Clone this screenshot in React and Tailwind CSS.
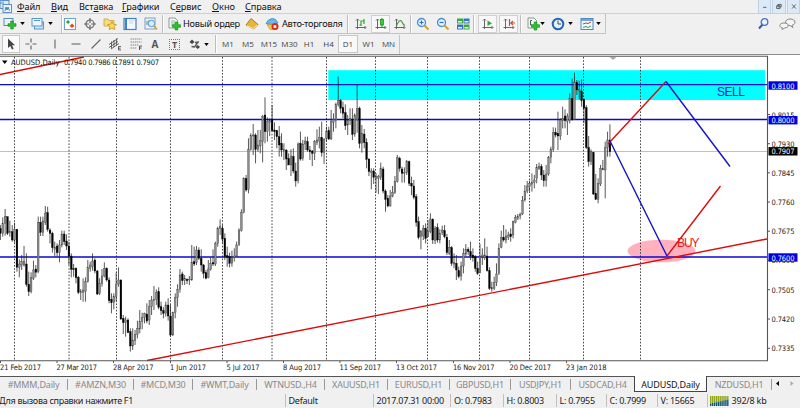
import React from "react";

/* Daily bars: [high, low, body top, body bottom, falling] in thirds of a pixel.
   Each block carries its own vertical origin. */
const BLOCKS = [
  {
    top: 190,
    bars: [
      [105,150,115,130,1],[82,140,100,130,0],[57,137,80,100,0],[80,135,80,130,1],[92,140,125,128,0],[105,155,125,150,1],
      [98,158,118,150,0],[117,245,118,232,1],[208,262,222,232,0],[195,240,215,225,0],[168,230,215,225,0],[190,290,222,283,1],
      [245,318,283,305,1],[247,310,262,305,0],[212,270,240,265,0],[225,262,237,247,1],[80,250,97,245,0],[80,138,97,127,1],
      [80,138,93,128,0],[48,105,70,97,0],[50,125,68,118,1],[115,160,120,130,1],[125,188,130,173,1],[155,200,172,178,0],
      [160,200,168,188,1],[150,217,165,188,0],[122,172,133,165,0],[122,165,132,155,1],[133,180,153,168,1],[155,225,168,198,1],
      [190,262,198,238,1],[222,260,236,238,1],[232,280,235,263,1],[258,312,262,307,1],[297,330,305,308,0],[265,335,300,308,0],
      [262,335,275,305,0],[210,278,233,275,0],[215,245,225,235,0],[190,242,213,230,0],[205,250,210,243,1],[240,315,243,312,1],
      [265,315,280,310,0],[237,290,258,280,0],[217,262,235,258,0],[232,275,235,270,1],[262,340,270,332,1],[310,370,328,338,1],
      [310,358,320,338,0],[248,335,282,320,0],[232,290,270,282,0],[268,390,270,387,1],[375,432,385,398,1],[380,440,390,398,0],
      [385,428,390,428,1],[415,485,425,468,1],[415,480,450,468,0],[420,465,433,452,0],[392,445,415,433,0],[360,430,395,417,0],
      [368,418,383,395,0],[368,400,370,382,0],[340,400,372,393,1],[330,405,350,390,0],[318,375,330,350,0],[288,360,328,332,0],
      [298,345,308,328,0],[292,358,305,352,1],[335,375,350,362,1],[352,385,362,370,1],[335,380,345,370,0],[325,392,345,378,1],
      [345,438,378,435,1],[365,438,368,435,0],[310,385,322,368,0],[283,350,298,322,0],[237,308,255,298,0],[245,285,252,272,1],
      [255,285,265,272,0],[265,282,268,272,1],[258,285,267,270,0],[165,272,217,270,0],[170,228,215,222,1],[168,225,180,217,0],
      [172,210,180,205,1],
    ],
  },
  {
    top: 90,
    bars: [
      [478,545,505,525,1],[522,565,525,550,1],[540,568,548,565,1],[510,565,537,563,0],[502,542,520,538,0],[478,528,518,522,1],
      [455,528,460,522,0],[410,470,415,460,0],[388,435,410,416,0],[405,460,415,447,1],[430,510,445,500,1],[470,530,497,502,1],
      [488,532,500,520,1],[482,530,503,520,0],[475,515,498,503,0],[455,500,465,498,0],[415,468,420,463,0],[358,425,367,422,0],
      [262,370,265,367,0],[255,305,265,300,1],[145,310,178,298,0],[130,182,137,178,0],[102,195,135,138,0],[130,220,135,178,1],
      [120,185,165,178,0],[120,190,152,168,0],[75,217,80,155,0],[22,160,75,125,1],[82,155,95,125,0],[85,138,92,97,0],
      [45,125,88,122,1],[97,150,120,125,1],[120,175,122,140,1],[108,200,140,165,1],[130,200,160,180,1],[160,210,178,182,0],
      [178,240,180,207,1],[190,225,205,225,1],[178,258,198,225,0],[175,250,200,243,1],[218,290,243,273,1],[157,280,162,272,0],
      [125,212,160,207,1],[150,212,162,205,0],[140,180,153,162,0],[140,185,155,180,1],[168,210,180,185,1],[180,228,183,190,1],
      [150,210,155,190,0],[118,165,150,157,0],[110,175,143,153,0],[95,200,143,188,1],[145,222,147,188,0],[110,155,125,145,0],
    ],
  },
  {
    top: 60,
    bars: [
      [200,240,212,237,1],[150,240,185,237,0],[160,215,178,187,0],[128,205,133,180,0],[50,140,122,133,0],[117,160,122,145,1],
      [125,175,143,160,1],[133,210,158,197,1],[165,225,180,195,0],[145,195,175,182,0],[145,240,178,223,1],[160,230,165,222,0],
      [73,218,145,180,0],[140,265,145,250,1],[195,278,220,250,0],[207,265,222,248,1],[235,325,247,298,1],[295,348,297,335,1],
      [325,388,333,337,0],[325,372,333,352,1],[340,398,350,355,0],[345,402,350,355,0],[308,360,325,352,0],[320,400,327,393,1],
      [388,455,393,418,1],[405,442,415,438,1],[390,440,408,438,0],[378,412,397,408,0],[348,402,365,398,0],[285,368,293,365,0],
      [290,335,295,325,1],[320,368,327,340,1],[322,368,337,340,0],[300,345,305,338,0],[302,378,305,370,1],[350,405,370,378,1],
      [360,418,378,412,1],[402,500,410,487,1],[470,538,485,532,1],[510,568,515,530,0],[495,540,505,528,0],[490,550,505,535,1],
      [480,530,515,530,0],[460,520,477,515,0],[475,552,478,540,1],[498,552,505,542,0],[490,548,503,540,1],[508,550,520,540,0],
      [497,525,510,518,0],[495,535,512,530,1],
    ],
  },
  {
    top: 160,
    bars: [
      [222,285,232,278,1],[240,285,262,280,0],[258,318,263,310,1],[280,325,308,312,0],[285,360,310,330,1],[320,355,332,350,1],
      [305,362,318,348,0],[265,340,280,318,0],[252,288,268,282,0],[262,285,268,275,1],[245,300,275,288,1],[265,305,285,293,1],
      [285,335,290,325,1],[305,345,325,340,1],[252,340,290,338,0],[265,315,285,290,0],[235,300,285,292,0],[260,335,288,332,1],
      [322,390,332,385,1],[365,395,383,387,0],[350,390,368,385,0],[310,378,342,368,0],[250,345,265,340,0],[212,265,233,262,0],
      [195,245,232,240,1],[208,250,228,240,0],[215,240,225,232,0],[205,245,222,230,1],[182,235,185,225,0],[165,190,172,188,0],
      [162,180,170,175,0],[158,178,163,168,0],[108,165,122,162,0],[75,125,93,120,0],[63,100,78,93,0],[62,95,70,80,0],
      [40,95,68,73,0],[45,85,60,68,0],[12,70,22,55,0],[8,30,20,25,0],[12,60,20,45,1],[30,80,45,62,1],[15,80,42,62,0],
    ],
  },
  {
    top: 60,
    bars: [
      [288,347,292,342,0],[260,310,268,292,0],[202,275,218,268,0],[203,232,217,225,1],[155,270,220,228,1],[175,240,180,228,0],
      [140,205,175,182,0],[148,205,168,182,1],[160,225,168,185,0],[100,190,115,182,0],[55,182,115,178,1],[38,180,68,178,0],
      [60,105,68,90,1],[62,118,88,93,0],[58,140,93,122,1],[115,190,118,145,1],[135,267,143,262,1],[228,320,262,305,1],
      [268,315,275,305,0],[275,405,277,402,1],[342,420,400,418,1],[355,430,370,418,0],[315,378,325,372,0],[300,330,325,330,0],
      [245,415,262,330,0],[215,290,240,262,0],[193,290,240,275,1],
    ],
  },
];

const STEP = 2.3625;
const BARS = BLOCKS.flatMap((b) =>
  b.bars.map(([h, l, t, u, d]) => [b.top + h / 3, b.top + l / 3, b.top + t / 3, b.top + u / 3, d])
);

const DAYS = [14.5, 69, 116.5, 170.5, 222.5, 272, 326.5, 375.5, 427.5, 479.5, 529.5, 583.5, 640.5];
const DATES = [
  ["21 Feb 2017", 0, 41], ["27 Mar 2017", 56.5, 40.5], ["28 Apr 2017", 113, 40.5], ["1 Jun 2017", 170, 36],
  ["5 Jul 2017", 226.5, 33], ["8 Aug 2017", 283, 38], ["11 Sep 2017", 339.5, 41.5], ["13 Oct 2017", 396, 41],
  ["16 Nov 2017", 453, 41.5], ["20 Dec 2017", 509.5, 41.5], ["23 Jan 2018", 566, 40.5],
];
const PRICES = [
  ["0.8015", 114.5], ["0.7930", 143.7], ["0.7845", 172.8], ["0.7760", 202], ["0.7675", 231.2],
  ["0.7590", 260.4], ["0.7505", 289.7], ["0.7420", 319], ["0.7335", 348.3],
];

function Tag({ y, text, fill }) {
  return (
    <g>
      <rect x="768.5" y={y - 4.2} width="29" height="8.4" fill={fill} />
      <text x="771.5" y={y + 3} textLength="23" fill="#fff">{text}</text>
    </g>
  );
}

function Chart() {
  return (
    <svg className="block h-[321px] w-[800px] bg-white font-['DejaVu_Sans_Condensed','DejaVu_Sans',sans-serif] text-[7.5px]" viewBox="0 55 800 321">
      <rect x="328.3" y="70.2" width="436.7" height="29.8" fill="#00ffff" />
      <ellipse cx="661.5" cy="251" rx="34" ry="11.3" fill="#ffb2be" />
      <path d="M0 151.5H767" stroke="#c0c0c0" />
      <g stroke="#333" strokeWidth="0.9" strokeDasharray="1.6 1.6">
        {DAYS.map((x) => <path key={x} d={`M${x} 57V360`} />)}
      </g>
      <g stroke="#0a0ad2" strokeWidth="1.4">
        <path d="M0 84.6H767M0 119.5H767M0 257H767" />
      </g>
      <g>
        {BARS.map(([h, l, t, u, d], i) => {
          const x = 0.4 + i * STEP;
          return (
            <g key={i}>
              <path d={`M${x} ${h}V${l}`} stroke="#222" strokeWidth="0.75" />
              <rect x={x - 0.85} y={t} width="1.7" height={Math.max(u - t, 0.9)} fill={d ? "#000" : "#8c8c8c"} stroke={d ? "#000" : "#3c3c3c"} strokeWidth="0.35" />
            </g>
          );
        })}
      </g>
      <g fill="none" strokeWidth="1.4">
        <path d="M147 360.5L767 239M0 74.5L84 57" stroke="#dc0c0c" />
        <path d="M608 144L666 81.5M667 256L720.5 186" stroke="#dc0c0c" />
        <path d="M666 81.5L730 166.5M610 141L667 256" stroke="#1414cc" />
      </g>
      <path d="M609.500 57l3.500 3 3.500-3z" fill="#aaa" />
      <path d="M0 56.3H767.5V360.7H0" fill="none" stroke="#555" strokeWidth="1.1" />
      <g className="font-['Liberation_Sans',sans-serif] text-[12px]">
        <text x="717" y="96" textLength="28" fill="#1020c8">SELL</text>
        <text x="677" y="246.5" textLength="22.5" fill="#e81818">BUY</text>
      </g>
      <path d="M2 60.5h5.500l-2.750 3.500z" fill="#000" />
      <g fill="#111">
        <text x="11" y="65" textLength="48.500" lengthAdjust="spacingAndGlyphs">AUDUSD,Daily</text>
        <text x="64" y="65" textLength="95">0.7940 0.7986 0.7891 0.7907</text>
      </g>
      <g fill="#222">
        {DATES.map(([s, x, w]) => (
          <g key={s}>
            <path d={`M${x + 0.5} 361v2`} stroke="#555" />
            <text x={x} y="370" textLength={w}>{s}</text>
          </g>
        ))}
        {PRICES.map(([s, y]) => (
          <g key={s}>
            <path d={`M768 ${y}h2`} stroke="#555" />
            <text x="771.5" y={y + 3} textLength="23">{s}</text>
          </g>
        ))}
      </g>
      <Tag y={85.5} text="0.8100" fill="#0000e0" />
      <Tag y={120.2} text="0.8000" fill="#0000e0" />
      <Tag y={151.3} text="0.7907" fill="#000" />
      <Tag y={257.5} text="0.7600" fill="#0000e0" />
    </svg>
  );
}

/* ---------- toolbar pieces ---------- */
const Ico = ({ children, c = "" }) => (
  <svg viewBox="0 0 14 14" className={`h-[14px] w-[14px] shrink-0 ${c}`} fill="none">{children}</svg>
);
const Down = ({ c }) => (
  <svg viewBox="0 0 6 4" className={`h-[3px] w-[5px] shrink-0 ${c}`}><path d="M0 0h6L3 4z" fill="#000" /></svg>
);
const Sep = ({ c }) => <div className={`h-[18px] w-[2px] shrink-0 border-l border-[#bdbdbd] bg-white ${c}`} />;
const Plus = ({ x, y }) => (
  <path transform={`translate(${x} ${y})`} d="M2.7 0h2.6v2.7H8v2.6H5.3V8H2.700V5.3H0V2.7h2.7z" fill="#27c427" stroke="#11851a" strokeWidth=".6" />
);
const Axes = () => <path d="M3.500 2v10M1.500 10.500h10M2 3.500L3.500 2 5 3.500M10.500 9l1.500 1.500-1.500 1.500" stroke="#666" strokeWidth="1" />;
const Lens = ({ minus }) => (
  <>
    <path d="M8.500 8.500l4 4" stroke="#d3a336" strokeWidth="2.200" />
    <circle cx="5.500" cy="5.500" r="4" fill="#e6f3ff" stroke="#4b8fd0" strokeWidth="1.300" />
    <path d={minus ? "M3.500 5.500h4" : "M3.500 5.500h4M5.500 3.500v4"} stroke="#2f73b8" strokeWidth="1.200" />
  </>
);
const Pressed = ({ children, c }) => (
  <div className={`flex h-[18px] w-[19px] shrink-0 items-center justify-center border border-[#d0d0d0] bg-[#f8f8f8] ${c}`}>{children}</div>
);

function MenuBar() {
  return (
    <div className="flex h-[14px] items-center border-b border-[#cfcfcf] text-[9.2px] text-[#111]">
      <svg viewBox="0 0 12 13" className="h-[13px] w-[12px]" fill="none">
        <rect x="0" y=".5" width="9" height="8" fill="#d9e9f8" stroke="#5c8fc5" />
        <rect x="3" y="4.500" width="8.500" height="8" fill="#eef6fd" stroke="#5c8fc5" />
        <path d="M1 4V2M3 4V1.500M5 11l1-4 1 3 1-3 1.500 4" stroke="#3978b8" strokeWidth=".9" />
      </svg>
      <span className="ml-[5px] w-[34px] tracking-[-0.1px]"><u>Ф</u>айл</span>
      <span className="w-[28px] tracking-[-0.1px]"><u>В</u>ид</span>
      <span className="w-[43px] tracking-[-0.1px]">Вст<u>а</u>вка</span>
      <span className="w-[48px] tracking-[-0.1px]"><u>Г</u>рафики</span>
      <span className="w-[42px] tracking-[-0.1px]">С<u>е</u>рвис</span>
      <span className="w-[33px]"><u>О</u>кно</span>
      <span className="tracking-[-0.1px]"><u>С</u>правка</span>
      <div className="ml-auto flex h-[14px] gap-px">
        {["M5 8h4", "M6 4.500h4v3H6zM4.500 6h4v3.500h-4z", "M5 4.500l4.500 5M9.500 4.500L5 9.500"].map((d) => (
          <svg key={d} viewBox="0 0 14 14" className="h-[14px] w-[13.5px] border border-t-0 border-[#c3d2e2] bg-[#dce9f7]" fill="none">
            <path d={d} stroke="#555" strokeWidth="1.100" />
          </svg>
        ))}
      </div>
    </div>
  );
}

function MainToolbar() {
  return (
    <div className="flex h-[20px] items-center text-[9.2px] text-[#111]">
      <div className="flex h-[20px] w-[606px] shrink-0 items-center border-r border-b border-[#c4c4c4]">
        <Ico c="ml-[3px]"><rect x="1" y="1.500" width="9" height="7" fill="#eaf3fb" stroke="#5a8cb8" /><Plus x={5} y={4} /></Ico>
        <Down c="ml-[3px]" />
        <Ico c="ml-[6px]"><rect x="3.500" y="5" width="9" height="7" fill="#d4e7f7" stroke="#5a94cc" /><rect x="1" y="1.500" width="10" height="7.500" fill="#eef6fd" stroke="#5a94cc" /><path d="M3 3.500h6" stroke="#5a94cc" /></Ico>
        <Down c="ml-[3px]" />
        <Sep c="ml-[8px]" />
        <Ico c="ml-0"><rect x="1.500" y="1.500" width="11" height="11" fill="#fff" stroke="#6ba3cd" /><path d="M3 5l2-2 2 2-2 2z" fill="#29a62f" /><path d="M6.500 9L9 6.500 11.500 9 9 11z" fill="#de4d2c" /></Ico>
        <Ico c="ml-[6px]"><circle cx="7" cy="7" r="4" stroke="#666" strokeWidth="1.200" /><path d="M7 1v5M7 8v5M1 7h5M8 7h5" stroke="#666" strokeWidth="1.200" /></Ico>
        <Ico c="ml-[6px]"><path d="M1 2h4l1 1.500h5V9H1z" fill="#f8dc77" stroke="#c9a13c" strokeWidth=".8" /><path d="M9 4.500l1.400 2.700 3 .4-2.200 2 .6 3L9 11.200l-2.700 1.400.5-3-2.200-2 3-.4z" fill="#ffd94a" stroke="#b98a20" strokeWidth=".7" /></Ico>
        <Ico c="ml-[6px]"><rect x="1" y="1.500" width="12" height="11" fill="#f1f8ff" stroke="#4281bf" strokeWidth="1.200" /><path d="M2 2h2v10H2z" fill="#3f82c8" /><path d="M6 4h5M6 6h4" stroke="#c5d8e8" /></Ico>
        <Ico c="ml-[7px]"><rect x="1" y="1" width="10" height="11" fill="#e9f2f9" stroke="#78a4c8" /><path d="M3 8V4M5 9V3" stroke="#6c8797" /><circle cx="7.500" cy="6.500" r="3.200" fill="#d9edff" stroke="#5b94c8" /><path d="M10 9l3 3.500" stroke="#d3a336" strokeWidth="1.800" /></Ico>
        <Sep c="ml-[4px]" />
        <Ico c="ml-[4px]"><path d="M1 1h6l2.500 2.500V11H1z" fill="#f3f7f4" stroke="#6a8c79" strokeWidth=".8" /><path d="M3 4h4M3 6h4M3 8h3" stroke="#87a293" strokeWidth=".8" /><Plus x={4.5} y={5} /></Ico>
        <span className="ml-px w-[57px] whitespace-nowrap tracking-[-0.25px]">Новый ордер</span>
        <Ico c="ml-[5px]"><path d="M1 8l5-6.500 7 6L8.500 12z" fill="#e9b537" stroke="#a87317" strokeWidth=".9" /><path d="M2 8.500l6 3 4-3.500" stroke="#fff0b8" /></Ico>
        <Ico c="ml-[6px]"><path d="M1 6.500Q3 2 7 1.500T13 6q-6 3-12 .5z" fill="#66b9e8" stroke="#3383b8" strokeWidth=".7" /><path d="M2 7.500h10L8 12.500H5z" fill="#f2c849" stroke="#b68c26" strokeWidth=".6" /><circle cx="10" cy="9.500" r="3.500" fill="#d92a1c" /><rect x="8.600" y="8.200" width="2.700" height="2.700" fill="#fff" /></Ico>
        <span className="ml-[3px] w-[62px] whitespace-nowrap tracking-[-0.25px]">Авто-торговля</span>
        <Sep c="ml-[3px]" />
        <Ico c="ml-[5px]"><Axes /><path d="M7 9V4h3M10 2v5M5.500 8H7" stroke="#2aa92f" strokeWidth="1.200" /></Ico>
        <Pressed c="ml-[3px]"><Ico><Axes /><path d="M8 1v9" stroke="#158b1c" /><rect x="6.500" y="2.500" width="3" height="5.500" fill="#2bd337" stroke="#158b1c" strokeWidth=".7" /></Ico></Pressed>
        <Ico c="ml-[3px]"><Axes /><path d="M3.500 8.500Q7 1 9 5t3 3" stroke="#35983a" strokeWidth="1.100" /></Ico>
        <Sep c="ml-[3px]" />
        <Ico c="ml-[4px]"><Lens /></Ico>
        <Ico c="ml-[6px]"><Lens minus /></Ico>
        <Ico c="ml-[6px]"><path d="M1 1.500h6v5H1zM7.500 7.500h6v5h-6z" fill="#3ba741" /><path d="M7.500 1.500h6v5h-6zM1 7.500h6v5H1z" fill="#3a72be" /><path d="M2 4h4v1.500H2zM8.500 4h4v1.500h-4zM2 10h4v1.500H2zM8.500 10h4v1.500h-4z" fill="#e5f2fa" /></Ico>
        <Sep c="ml-[3px]" />
        <Pressed c="ml-[3px]"><Ico><Axes /><path d="M6.500 3.500L11 6.300 6.500 9z" fill="#2aae34" /></Ico></Pressed>
        <Pressed c="ml-[2px]"><Ico><Axes /><path d="M7.500 2v7" stroke="#4775ad" strokeWidth="1.200" /><path d="M13 6H9.500M11 4L8.800 6 11 8" stroke="#d24b28" strokeWidth="1.200" /></Ico></Pressed>
        <Sep c="ml-[2px]" />
        <Ico c="ml-[5px]"><path d="M1 1h6l2.500 2.500V11H1z" fill="#f3f7f4" stroke="#6a8c79" strokeWidth=".8" /><path d="M5 3.500H3.500V8H5" stroke="#555" /><Plus x={4.5} y={5} /></Ico>
        <Down c="ml-[-1px]" />
        <Ico c="ml-[6px]"><circle cx="7" cy="7" r="5.300" fill="#e3f1ff" stroke="#2267b0" strokeWidth="2" /><path d="M7 3.500V7h3" stroke="#444" /></Ico>
        <Down c="ml-[3px]" />
        <Ico c="ml-[7px]"><rect x="1" y="1.500" width="12" height="11" fill="#f1f8fd" stroke="#4c89bc" /><path d="M1 3h12" stroke="#4c89bc" strokeWidth="1.500" /><path d="M3 7l3-1 2 .5 3-1.500" stroke="#ba4435" /><path d="M3 10.500l3-1 2 1 3-1.500" stroke="#3e9950" /></Ico>
        <Down c="ml-[2px]" />
      </div>
      <Ico c="ml-[151px]"><path d="M5.500 7.500L2 11.500" stroke="#315bb4" strokeWidth="2" /><circle cx="7.500" cy="5" r="3.300" fill="#e8f1ff" stroke="#4672c4" strokeWidth="1.300" /></Ico>
      <svg viewBox="0 0 17 12" className="ml-[8px] h-[12px] w-[17px]" fill="#f4f4f4" stroke="#888">
        <path d="M11 1c3 0 5 1.300 5 3.200S14.500 7 13 7.200L14 9.500l-3-2C8 7.500 6.500 6 6.500 4.200S8.500 1 11 1z" />
        <path d="M5 5c2.600 0 4.200 1 4.200 2.600S7.500 10 5.500 10L3 11.500l.3-1.800C1.500 9.300.8 8.600.8 7.600.8 6 2.600 5 5 5z" />
      </svg>
    </div>
  );
}

const FRAMES = [
  ["M1", "w-[20px]"], ["M5", "w-[20px]"], ["M15", "w-[22px]"], ["M30", "w-[19px]"], ["H1", "w-[20px]"],
  ["H4", "w-[19px]"], ["D1", "w-[20px] border border-[#c8c8c8] bg-[#f9f9f9]"], ["W1", "w-[21px]"], ["MN", "w-[19px]"],
];

function DrawToolbar() {
  return (
    <div className="flex h-[21px] items-center border-b border-[#8c8c8c]">
      <div className="flex h-[19px] w-[400px] items-center border-r border-[#c4c4c4]">
        <div className="ml-[2px] flex h-[18px] w-[18px] items-center justify-center border border-[#c8c8c8] bg-[#fafafa]">
          <Ico><path d="M4 1.500v9.500l2.300-2 1.700 3.500 1.600-.8L8 8.300h3z" fill="#444" /></Ico>
        </div>
        <Ico c="ml-[4px]"><path d="M7 1.500v4M7 8.500v4M1.500 7h4M8.500 7h4" stroke="#666" strokeWidth="1.200" /></Ico>
        <Ico c="ml-[10px]"><path d="M7 2.500v9" stroke="#666" strokeWidth="1.100" /></Ico>
        <Ico c="ml-[7px]"><path d="M2.500 7h9" stroke="#666" strokeWidth="1.100" /></Ico>
        <Ico c="ml-[6px]"><path d="M2.500 11.500l9-9" stroke="#666" strokeWidth="1.100" /></Ico>
        <Ico c="ml-[5px]"><path d="M1 7.500l9-6M1 10.500l9-6M3 12l8-5.500M3.500 4.500v7M6 3v7M8.500 1.500v7" stroke="#555" strokeWidth=".9" /><path d="M13 9.500h-2.500v3.500H13M10.500 11.200h2" stroke="#444" strokeWidth=".8" /></Ico>
        <Ico c="ml-[7px]"><path d="M1.500 2h11M1.500 5h11M1.500 8h8M1.500 11h6" stroke="#888" strokeDasharray="1.500 .6" /><path d="M13 9h-2.500v4M10.500 11h2" stroke="#444" strokeWidth=".9" /></Ico>
        <span className="ml-[5px] w-[14px] text-center font-['Open_Sans'] text-[10px] font-bold text-[#555]">A</span>
        <div className="ml-[7px] flex h-[11px] w-[11px] items-center justify-center border border-dotted border-[#777] font-['Open_Sans'] text-[9px] font-bold text-[#555]">T</div>
        <Ico c="ml-[8px]"><path d="M1.500 5L4 2.500 6.500 5 4 7zM7.500 10l2.300 2 2.200-2-2.200-2z" fill="#444" /><path d="M7 5.500l4-.5M3.500 9.500l3 .5 3-4" stroke="#555" strokeWidth="1.300" /></Ico>
        <Down c="ml-[2px]" />
        <Sep c="ml-[6px]" />
        <div className="flex h-[19px] items-center pl-px font-['Open_Sans',sans-serif] text-[8px] text-[#444]">
          {FRAMES.map(([t, w]) => (
            <span key={t} className={`flex h-[18px] items-center justify-center ${w}`}>{t}</span>
          ))}
        </div>
      </div>
    </div>
  );
}

const TABS = [
  ["#MMM,Daily", "w-[68px]"], ["#AMZN,M30", "w-[66px]"], ["#MCD,M30", "w-[59px]"], ["#WMT,Daily", "w-[64px]"],
  ["WTNUSD.,H4", "w-[68px]"], ["XAUUSD,H1", "w-[63px]"], ["EURUSD,H1", "w-[62px]"], ["GBPUSD,H1", "w-[61px]"],
  ["USDJPY,H1", "w-[60px]"], ["USDCAD,H4", "w-[63px]"],
];

function Tabs() {
  return (
    <div className="flex h-[16px] items-start border-t border-[#555] text-[9px] text-[#8a8a8a]">
      {TABS.map(([t, w], i) => (
        <div key={t} className={`flex h-[15px] shrink-0 items-center ${w}`}>
          <span className="flex-1 text-center whitespace-nowrap tracking-[-0.2px]">{t}</span>
          {i < 9 && <i className="h-[11px] w-px bg-[#999]" />}
        </div>
      ))}
      <div className="-mt-px flex h-[16px] w-[73px] shrink-0 items-center justify-center border border-t-0 border-[#444] bg-white pt-px tracking-[-0.1px] text-[#111]">AUDUSD,Daily</div>
      <div className="flex h-[15px] w-[65px] shrink-0 items-center">
        <span className="flex-1 text-center tracking-[-0.2px]">NZDUSD,H1</span>
        <i className="h-[11px] w-px bg-[#999]" />
      </div>
      <svg viewBox="0 0 28 15" className="h-[15px] w-[28px]"><path d="M7 4v5L4 6.500z" fill="#000" /><path d="M18.500 4v5l3-2.500z" fill="#aaa" /></svg>
    </div>
  );
}

const STATUS = [
  ["Default", "w-[88px]"], ["2017.07.31 00:00", "w-[77.5px]"], ["O: 0.7983", "w-[52.5px]"], ["H: 0.8003", "w-[53px]"],
  ["L: 0.7955", "w-[50px]"], ["C: 0.7999", "w-[51px]"], ["V: 15665", "w-[50px]"],
];

function StatusBar() {
  return (
    <div className="flex h-[16px] items-center pt-px text-[9px] text-[#222]">
      <span className="-ml-px w-[285.5px] shrink-0 whitespace-nowrap tracking-[-0.3px]">Для вызова справки нажмите F1</span>
      {STATUS.map(([t, w]) => (
        <span key={t} className={`flex h-[13px] shrink-0 items-center border-l border-[#c0c0c0] pl-[3px] whitespace-nowrap tracking-[-0.25px] ${w}`}>{t}</span>
      ))}
      <div className="flex h-[13px] items-center border-l border-[#c0c0c0] pl-[2px]">
        <svg viewBox="0 0 19 10" className="h-[10px] w-[19px]">
          {[0, 1, 2, 3, 4, 5, 6, 7, 8, 9].map((i) => (
            <g key={i}>
              <rect x={i * 1.9} y="0" width="1.4" height={7.5 - i * 0.45} fill="#91a51c" />
              <rect x={i * 1.9} y={7.5 - i * 0.45} width="1.4" height={2.5 + i * 0.45} fill="#135475" />
            </g>
          ))}
        </svg>
        <span className="ml-[3px] whitespace-nowrap tracking-[-0.2px]">392/8 kb</span>
      </div>
    </div>
  );
}

export default function App() {
  return (
    <div className="h-[408px] w-[800px] overflow-hidden bg-[#f0f0f0] font-['Noto_Sans','Open_Sans',sans-serif] leading-none">
      <MenuBar />
      <MainToolbar />
      <DrawToolbar />
      <Chart />
      <Tabs />
      <StatusBar />
    </div>
  );
}
